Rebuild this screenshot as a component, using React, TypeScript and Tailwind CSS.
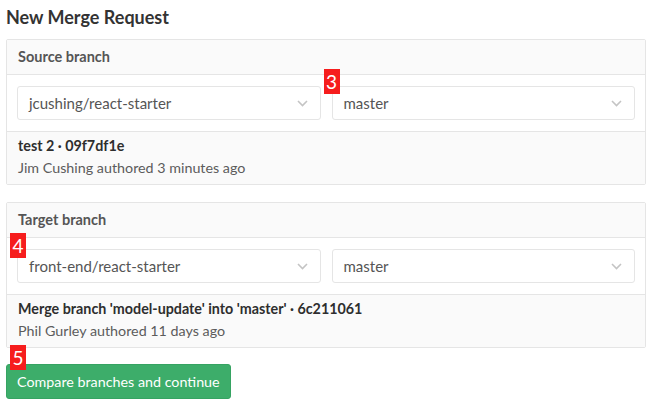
import React from 'react';

const font = { fontFamily: 'Lato, "Open Sans", sans-serif' };

const Badge: React.FC<{ n: string; className: string }> = ({ n, className }) => (
  <span
    className={`absolute z-10 flex h-[25px] w-[16px] items-center justify-center bg-[#f61d1d] text-[19px] leading-none text-white ${className}`}
  >
    {n}
  </span>
);

const Chevron = () => (
  <svg width="11" height="7" viewBox="0 0 11 7" className="text-[#c4c4c4]">
    <path d="M1 1l4.5 4.5L10 1" fill="none" stroke="currentColor" strokeWidth="1.6" />
  </svg>
);

const Select: React.FC<{ value: string; badge?: React.ReactNode }> = ({ value, badge }) => (
  <div className="relative flex-1">
    {badge}
    <div className="flex h-[34px] items-center justify-between rounded-[3px] border border-[#e5e5e5] bg-white pl-[11px] pr-[12px] text-[15px] text-[#555]">
      <span>{value}</span>
      <Chevron />
    </div>
  </div>
);

interface PanelProps {
  title: string;
  left: React.ReactNode;
  right: React.ReactNode;
  commit: string;
  author: string;
}

const Panel: React.FC<PanelProps> = ({ title, left, right, commit, author }) => (
  <div className="rounded-[2px] border border-[#e5e5e5]">
    <div className="flex h-[35px] items-center border-b border-[#e5e5e5] bg-[#fafafa] px-[11px] text-[14.5px] font-bold text-[#555]">
      {title}
    </div>
    <div className="flex gap-[11px] bg-white px-[10px] py-[11px]">
      {left}
      {right}
    </div>
    <div className="h-[53px] border-t border-[#e5e5e5] bg-[#fafafa] px-[11px] pt-[3px]">
      <div className="text-[14.3px] font-bold leading-[22px] text-[#2e2e2e]">{commit}</div>
      <div className="text-[14.3px] leading-[22px] text-[#5c5c5c]">{author}</div>
    </div>
  </div>
);

export default function App() {
  return (
    <div className="w-[656px] bg-white pl-[6px] pt-[5px]" style={font}>
      <div className="w-[640px]">
        <h1 className="mb-[10px] text-[18px] font-bold leading-[24px] text-[#333]">New Merge Request</h1>
        <Panel
          title="Source branch"
          left={<Select value="jcushing/react-starter" />}
          right={<Select value="master" badge={<Badge n="3" className="-left-[8px] -top-[17px]" />} />}
          commit="test 2 · 09f7df1e"
          author="Jim Cushing authored 3 minutes ago"
        />
        <div className="h-[17px]" />
        <Panel
          title="Target branch"
          left={<Select value="front-end/react-starter" badge={<Badge n="4" className="-left-[7px] -top-[16px]" />} />}
          right={<Select value="master" />}
          commit="Merge branch 'model-update' into 'master' · 6c211061"
          author="Phil Gurley authored 11 days ago"
        />
        <div className="relative mt-[16px] inline-block">
          <Badge n="5" className="left-[4px] -top-[19px]" />
          <button className="h-[35px] rounded-[3px] border border-[#36a362] bg-[#3dad6a] px-[10px] text-[14.3px] text-white">
            Compare branches and continue
          </button>
        </div>
      </div>
    </div>
  );
}
